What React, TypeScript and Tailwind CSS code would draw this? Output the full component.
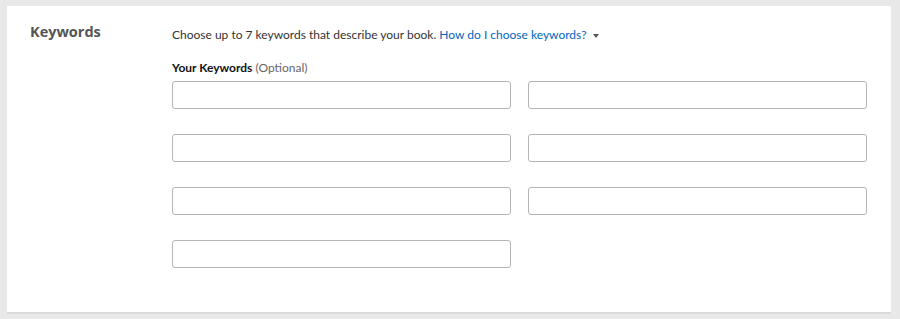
const KeywordInput: React.FC = () => {
  return (
    <input
      type="text"
      className="h-[28px] w-full rounded-[3px] border border-[#b5b5b5] bg-white px-2 text-[13px] text-[#111] outline-none"
    />
  );
};

export default function App() {
  return (
    <div
      className="h-[319px] w-[900px] bg-[#e8e8e8] pt-[6px] pl-[7px] pr-[9px]"
      style={{ fontFamily: '"Open Sans", Arial, sans-serif' }}
    >
      <div className="flex h-[308px] border-b-2 border-[#dadada] bg-white pl-[23px] pr-[24px] pt-[16px]">
        <div className="w-[142px] shrink-0">
          <h2 className="text-[14.5px] font-bold leading-5 text-[#555]">Keywords</h2>
        </div>
        <div className="flex-1" style={{ fontFamily: 'Lato, "Open Sans", sans-serif' }}>
          <p className="mt-[4px] text-[12px] leading-[18px] text-[#333]">
            Choose up to 7 keywords that describe your book.{" "}
            <a className="text-[#0066c0]" href="#">
              How do I choose keywords?
            </a>
            <span className="ml-[6px] inline-block align-middle border-x-[3px] border-t-[4px] border-x-transparent border-t-[#555]"></span>
          </p>
          <p className="mt-[16px] text-[12px] leading-4 text-[#111]">
            <span className="font-bold">Your Keywords</span>{" "}
            <span className="text-[#666]">(Optional)</span>
          </p>
          <div className="mt-[5px] grid grid-cols-2 gap-x-[17px] gap-y-[25px]">
            <KeywordInput />
            <KeywordInput />
            <KeywordInput />
            <KeywordInput />
            <KeywordInput />
            <KeywordInput />
            <KeywordInput />
          </div>
        </div>
      </div>
    </div>
  );
}
